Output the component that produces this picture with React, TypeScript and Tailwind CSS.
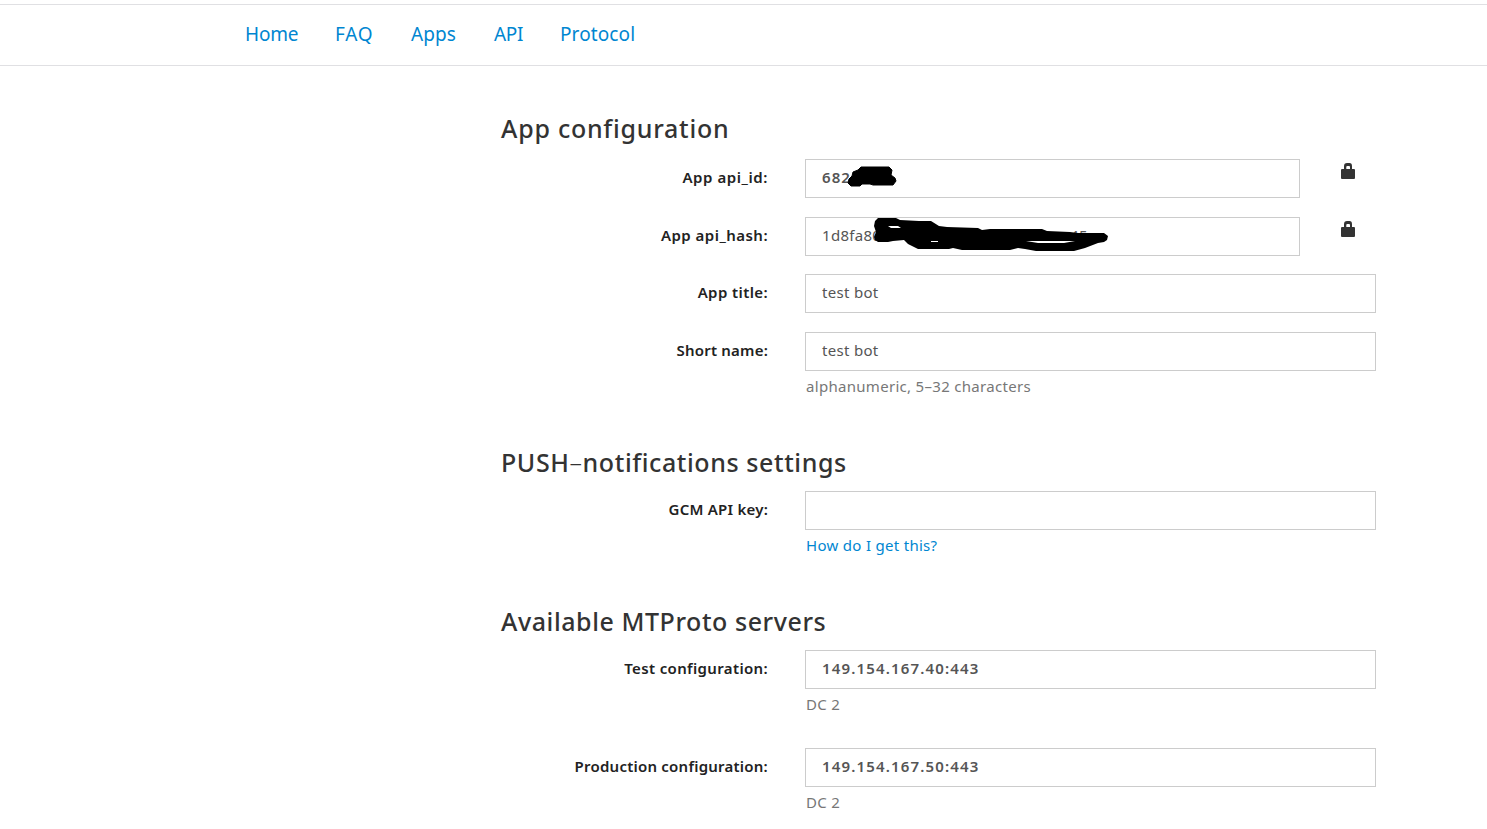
import React from "react";

type FieldProps = {
  label: string;
  value?: string;
  bold?: boolean;
  locked?: boolean;
  labelClass?: string;
  valueClass?: string;
  className?: string;
  children?: React.ReactNode;
  overlay?: React.ReactNode;
};

function Lock() {
  return (
    <svg className="mt-[4px] ml-[41px] h-4 w-[14px] shrink-0" viewBox="0 0 14 16" fill="#333">
      <path fillRule="evenodd" d="M3 6V3.2Q3 0 6 0H8.500Q11 0 11 3.200V6H13Q14 6 14 7V15Q14 16 13 16H1Q0 16 0 15V7Q0 6 1 6ZM5.300 6H9V4Q9 3 8 3H6.300Q5.300 3 5.300 4Z" />
    </svg>
  );
}

function Field({
  label,
  value = "",
  bold,
  locked,
  labelClass = "tracking-[0.3px]",
  valueClass = "tracking-[0.3px]",
  className = "",
  children,
  overlay,
}: FieldProps) {
  return (
    <div className={"flex items-start " + className}>
      <label className="w-[267px] shrink-0 text-right text-[15px] leading-[36px] font-semibold whitespace-nowrap text-[#222]">
        <span className={labelClass}>{label}</span>
      </label>
      <div className="ml-[37px] w-[571px] shrink-0">
        <div className="flex">
          <div
            className={
              "relative h-[39px] border border-[#ccc] pl-4 text-[15px] leading-[34px] text-[#555] " +
              (bold ? "font-semibold " : "") +
              (locked ? "w-[495px]" : "w-[571px]")
            }
          >
            <span className={valueClass}>{value}</span>
            {overlay}
          </div>
          {locked && <Lock />}
        </div>
        {children}
      </div>
    </div>
  );
}

const heading = "h-[30px] text-[25px] leading-[28px] font-medium whitespace-nowrap text-[#333]";
const help = "mt-[5px] h-[21px] pl-px text-[15px] leading-5 tracking-[0.3px] text-[#777]";

export default function App() {
  return (
    <div className="h-[829px] overflow-hidden bg-white pt-1 font-['Noto_Sans',sans-serif]">
      <nav className="flex h-[62px] border-y border-[#e0e0e3] pl-[245px] text-[19px] leading-[58px] text-[#0086d1]">
        <a className="w-[90px] tracking-[-0.2px]">Home</a>
        <a className="w-[76px] tracking-[0.7px]">FAQ</a>
        <a className="w-[83px] tracking-[0.1px]">Apps</a>
        <a className="w-[66px] tracking-[-0.3px]">API</a>
        <a className="tracking-[0.1px]">Protocol</a>
      </nav>
      <main className="ml-[501px] w-[875px] pt-[48px]">
        <h2 className={heading + " tracking-[0.75px]"}>App configuration</h2>
        <Field
          className="mt-[15px]"
          label="App api_id:"
          labelClass="tracking-[0.57px]"
          value="682"
          valueClass="tracking-[1.1px]"
          bold
          locked
          overlay={
            <svg className="absolute top-0 left-0 h-[37px] w-[120px] overflow-visible" viewBox="806 160 120 37">
              <path d="M848 183L849 179L852 176L853 172L858 170L861 167H889L892 170L891 175L895 178L896 181L893 185H873L870 184L862 184L860 186H851Z" stroke="#000" strokeLinejoin="round" />
            </svg>
          }
        />
        <Field
          className="mt-[19px]"
          label="App api_hash:"
          labelClass="tracking-[0.47px]"
          value="1d8fa80"
          valueClass="tracking-[0.3px]"
          locked
          overlay={
            <>
              <span className="absolute top-0 left-[264px] tracking-[0.3px]">45</span>
              <svg className="absolute top-0 left-0 h-[37px] w-[320px] overflow-visible" viewBox="806 218 320 37">
                <path
                  fillRule="evenodd"
                  d="M875 221L878 218H896L900 220L919 221H931L939 226L947 227L978 228L982 230L990 229H1042L1047 231L1070 232L1078 233H1104L1108 236L1107 240L1104 242L1098 243L1085 248L1074 251H1036L1025 249L1018 248L1010 250H962L953 248L949 249H918L908 244L904 240L893 241L888 242H878L875 240L874 237L876 232L874 226ZM888 226L891 228L901 228L898 226ZM931 241V242H938V241ZM1026 241L1038 243H1064L1075 241Z"
                />
              </svg>
            </>
          }
        />
        <Field className="mt-[18px]" label="App title:" labelClass="tracking-[0.4px]" value="test bot" />
        <Field className="mt-[19px]" label="Short name:" labelClass="tracking-[0.2px]" value="test bot">
          <p className={help}>alphanumeric, 5–32 characters</p>
        </Field>
        <h2 className={heading + " mt-[51px] tracking-[0.59px]"}>PUSH<span className="font-light">–</span>notifications settings</h2>
        <Field className="mt-[13px]" label="GCM API key:" labelClass="tracking-[0.23px]">
          <p className={help}>
            <a className="text-[#0086d1]">How do I get this?</a>
          </p>
        </Field>
        <h2 className={heading + " mt-[51px] tracking-[0.57px]"}>Available MTProto servers</h2>
        <Field className="mt-[13px]" label="Test configuration:" labelClass="tracking-[0.35px]" value="149.154.167.40:443" valueClass="tracking-[1.15px]" bold>
          <p className={help}>DC 2</p>
        </Field>
        <Field className="mt-[33px]" label="Production configuration:" labelClass="tracking-[0.23px]" value="149.154.167.50:443" valueClass="tracking-[1.15px]" bold>
          <p className={help}>DC 2</p>
        </Field>
      </main>
    </div>
  );
}
